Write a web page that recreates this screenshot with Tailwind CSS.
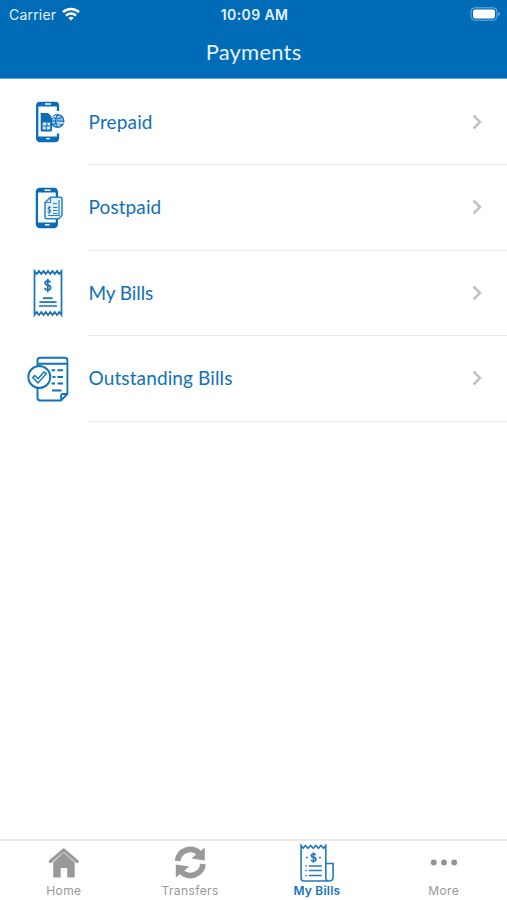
<!DOCTYPE html>
<html lang="en">
<head>
  <meta charset="UTF-8" />
  <meta name="viewport" content="width=device-width, initial-scale=1" />
  <title>Payments</title>
  <script src="https://cdn.jsdelivr.net/npm/@tailwindcss/browser@4"></script>
</head>
<body class="bg-white font-['Lato',sans-serif]">
  <div class="flex flex-col w-full h-screen overflow-hidden">

    <!-- Header -->
    <header class="h-[79px] shrink-0 bg-[#006bb7] border-b border-[#5aa5d8] text-[#e4f3ff]">
      <div class="grid grid-cols-3 items-center h-7 pl-[9px] pr-[7px] font-['Inter',sans-serif] text-[14px]">
        <div class="flex items-center gap-[6px]">
          <span class="tracking-[0.2px]">Carrier</span>
          <svg class="w-[18px] h-[14px]" viewBox="0 0 18 14" fill="none" stroke="#fff" stroke-width="2.5">
            <path d="M1 5.200a11.400 11.400 0 0 1 16 0" />
            <path d="M4 8.600a7.200 7.200 0 0 1 10 0" />
            <path d="M9 13.600L6.400 11a3.800 3.800 0 0 1 5.200 0z" fill="#fff" stroke="none" />
          </svg>
        </div>
        <span class="text-center font-semibold tracking-[0.4px]">10:09 AM</span>
        <svg class="justify-self-end w-[30px] h-[14px]" viewBox="0 0 30 14">
          <rect x="1" y="0.800" width="26" height="12.400" rx="3.600" fill="none" stroke="#72b3e2" />
          <rect x="3" y="2.400" width="22" height="9.200" rx="2" fill="#fff" />
          <path d="M28.400 5v4q1.600-.6 1.600-2t-1.600-2z" fill="#72b3e2" />
        </svg>
      </div>
      <h1 class="text-center text-[22px] leading-[48px] tracking-[0.2px]">Payments</h1>
    </header>

    <!-- Menu -->
    <main class="flex-1 pt-[0.5px] text-[#1070b8] text-[19px]">
      <a class="flex h-[85.5px] pl-5">
        <svg class="w-[60px] h-[60px] self-center mr-2" viewBox="0 0 60 60" fill="none" stroke="#0b6db7" stroke-width="2.300">
          <path d="M38 19v-5q0-3-3-3H20.200q-3 0-3 3v32q0 3 3 3H35q3 0 3-3v-4.500" />
          <path d="M18 12.600h20M18 46.400h20" stroke-width="4" />
          <path d="M25 12h6M26 46.600h4" stroke="#fff" stroke-width="1.300" />
          <path d="M20.700 21h7.500l3.800 4v13q0 1.500-1.500 1.500h-8.300q-1.500 0-1.500-1.500z" fill="#0b6db7" stroke="none" />
          <path d="M22.700 30.500h7.500v7h-7.500z" fill="#d8ebf8" stroke="none" />
          <path d="M22.700 34h3.500v3.500M27 30.500v3.500h3" stroke-width="1.100" />
          <circle cx="37.500" cy="29" r="6.300" fill="#9bc6e5" stroke-width="1.300" />
          <path d="M31.500 29h12M33 25.500q5 3 9 0M33 32.500q5-3 9 0M37.500 23q-4 6 0 12" stroke-width="1" />
          <path d="M31 25.500l5-1.500M37 31h7" stroke="#fff" stroke-width="1" />
        </svg>
        <span class="flex flex-1 items-center justify-between border-b border-[#ececec] pr-6">
          <span class="ml-[0.5px] tracking-[0.15px]">Prepaid</span>
          <svg class="w-[12px] h-[16px]" viewBox="0 0 12 16" fill="none" stroke="#c2c2c5" stroke-width="2.500"><path d="M2.500 1.500L9 8l-6.500 6.500" /></svg>
        </span>
      </a>
      <a class="flex h-[85.5px] pl-5">
        <svg class="w-[60px] h-[60px] self-center mr-2" viewBox="0 0 60 60" fill="none" stroke="#0b6db7" stroke-width="2.300">
          <rect x="16.900" y="11" width="20" height="38" rx="3" />
          <path d="M17.500 12.600h19.500M17.500 46.600h19.500" stroke-width="4" />
          <path d="M24.500 12.300h6M25 46.800h4.500" stroke="#fff" stroke-width="1.500" />
          <path d="M30.500 19.200h10q1.500 0 1.500 1.500v16.500l-3 3.500H26.500q-1.500 0-1.500-1.500V24.500z" fill="#e3f0fa" stroke="#2c82c2" stroke-width="1.500" />
          <path d="M30.500 19.500v5H25.500M39 22v15.500H28M33 25.500h4M33 29.500h4.500M33 32.500h4.500M33 35.500h4.500" stroke="#2c82c2" stroke-width="1.200" />
          <path d="M30.800 29.800q-.8-.9-2-.5-1.300.8-.2 1.900l1.500.9q1.100 1.200-.2 2.200-1.300.4-2.200-.7M29.200 28v8" stroke-width="1" />
        </svg>
        <span class="flex flex-1 items-center justify-between border-b border-[#ececec] pr-6">
          <span class="ml-[0.5px] tracking-[0.1px]">Postpaid</span>
          <svg class="w-[12px] h-[16px]" viewBox="0 0 12 16" fill="none" stroke="#c2c2c5" stroke-width="2.500"><path d="M2.500 1.500L9 8l-6.500 6.500" /></svg>
        </span>
      </a>
      <a class="flex h-[85.5px] pl-5">
        <svg class="w-[60px] h-[60px] self-center mr-2" viewBox="0 0 60 60" fill="none" stroke="#1873b9" stroke-width="1.700">
          <path d="M14.500 8l2.250 3L19 8l2.250 3 2.250-3 2.250 3L28 8l2.250 3 2.250-3 2.250 3L37 8l2.250 3 2.250-3V52l-2.250-3L37 52l-2.250-3-2.250 3-2.250-3L28 52l-2.250-3-2.250 3-2.250-3L19 52l-2.250-3-2.250 3z" />
          <path d="M30.500 19.300q-.8-1.500-2.800-1.500-2.600.2-2.600 2.200 0 1.700 2.700 2.200 2.900.6 2.900 2.500 0 2-2.900 2.200-2.300 0-3.100-1.700M27.800 15.700v13.600" />
          <path d="M23 35.200h9.500M19.500 39.200h17M19 43h18" />
        </svg>
        <span class="flex flex-1 items-center justify-between border-b border-[#ececec] pr-6">
          <span class="ml-[0.5px] tracking-[-0.1px]">My Bills</span>
          <svg class="w-[12px] h-[16px]" viewBox="0 0 12 16" fill="none" stroke="#c2c2c5" stroke-width="2.500"><path d="M2.500 1.500L9 8l-6.500 6.500" /></svg>
        </span>
      </a>
      <a class="flex h-[85.5px] pl-5">
        <svg class="w-[60px] h-[60px] self-center mr-2" viewBox="0 0 60 60" fill="none" stroke="#1171b9" stroke-width="1.900">
          <path d="M17.500 18v-6.500q0-2.700 2.700-2.700h24.500q2.700 0 2.700 2.700v33.500l-6.500 6.500H20.200q-2.700 0-2.700-2.700V38M17.500 14.800h29.500M47.200 45h-4.300q-1.800 0-1.800 1.800v4.500" />
          <circle cx="19.300" cy="28" r="11" fill="#fff" />
          <path d="M12.800 28.500l2-2 3.200 3.200 6-6.700 2.300 1.700-8.300 9.300z" stroke-width="1.400" />
          <path d="M31.500 21.200h3.500M37.500 21.200h5.500M32.500 28h3M37.500 28h5.500M31.500 34.500h3.500M37.500 34.500h5.500M32 41.500h9.500" />
        </svg>
        <span class="flex flex-1 items-center justify-between border-b border-[#ececec] pr-6">
          <span class="ml-[0.5px] tracking-[0.12px]">Outstanding Bills</span>
          <svg class="w-[12px] h-[16px]" viewBox="0 0 12 16" fill="none" stroke="#c2c2c5" stroke-width="2.500"><path d="M2.500 1.500L9 8l-6.500 6.500" /></svg>
        </span>
      </a>
    </main>

    <!-- Tab bar -->
    <nav class="grid grid-cols-4 h-[61px] shrink-0 border-t-2 border-[#ebebeb] text-[#989898] text-[12px] leading-4 font-['Inter',sans-serif]">
      <a class="flex flex-col items-center">
        <svg class="w-[40px] h-[42px]" viewBox="-0.7 0 40 42" fill="#999">
          <path d="M20 11.200l11 10V36.500h-7.500v-9.500h-6.500v9.500H9.500V21.200z" />
          <path d="M6.500 20.500L20 8.800l13.500 11.700" fill="none" stroke="#999" stroke-width="3" stroke-linecap="round" stroke-linejoin="round" />
          <path d="M8.500 21.800L20 11.700l11.500 10.100" fill="none" stroke="#c8c8c8" stroke-width="0.600" />
        </svg>
        <span class="ml-px tracking-[0.4px]">Home</span>
      </a>
      <a class="flex flex-col items-center">
        <svg class="w-[40px] h-[42px]" viewBox="-0.3 0 40 42" fill="none" stroke="#999" stroke-width="5.800">
          <path d="M7.300 20A12.800 12.800 0 0 1 29 12.200" />
          <path d="M32.700 23A12.800 12.800 0 0 1 11 30.800" />
          <path d="M34.500 6.500v13l-13.500-2zM5.500 36.500v-13l13.500 2z" fill="#999" stroke="none" />
        </svg>
        <span class="tracking-[0.4px]">Transfers</span>
      </a>
      <a class="flex flex-col items-center text-[#1673b9] font-semibold">
        <svg class="w-[40px] h-[42px]" viewBox="0.7 0 40 42" fill="none" stroke="#2479ba" stroke-width="1.600">
          <path d="M29.500 37V4.500l-2.200 2.800-2.600-2.800-2.600 2.800-2.600-2.800-2.600 2.800-2.600-2.800-2.600 2.800-2.600-2.800-2.200 2.800-2.100-2.800V37q0 3 3 3h25q4 0 4-4V22.500h-6.500M29.500 36q0 4 3 4" />
          <path d="M19.500 14q-.8-1-2.300-1-2.200.1-2.200 1.700 0 1.300 2.200 1.700 2.500.4 2.500 2 0 1.600-2.500 1.700-1.800 0-2.600-1.200M17.200 11.200v10.600M9.500 16.500h2M22.700 16.500h2M9 25h1.500M12.500 25h13M9 29.500h1.500M12.500 29.500h13M9 34.500h1.500M12.500 34.500h13" />
        </svg>
        <span class="tracking-[0.2px]">My Bills</span>
      </a>
      <a class="flex flex-col items-center">
        <svg class="w-[40px] h-[42px]" viewBox="0 0 40 42" fill="#929292">
          <circle cx="9.800" cy="21.500" r="2.900" />
          <circle cx="20" cy="21.500" r="2.900" />
          <circle cx="30.200" cy="21.500" r="2.900" />
        </svg>
        <span class="tracking-[0.4px]">More</span>
      </a>
    </nav>
  </div>
</body>
</html>
